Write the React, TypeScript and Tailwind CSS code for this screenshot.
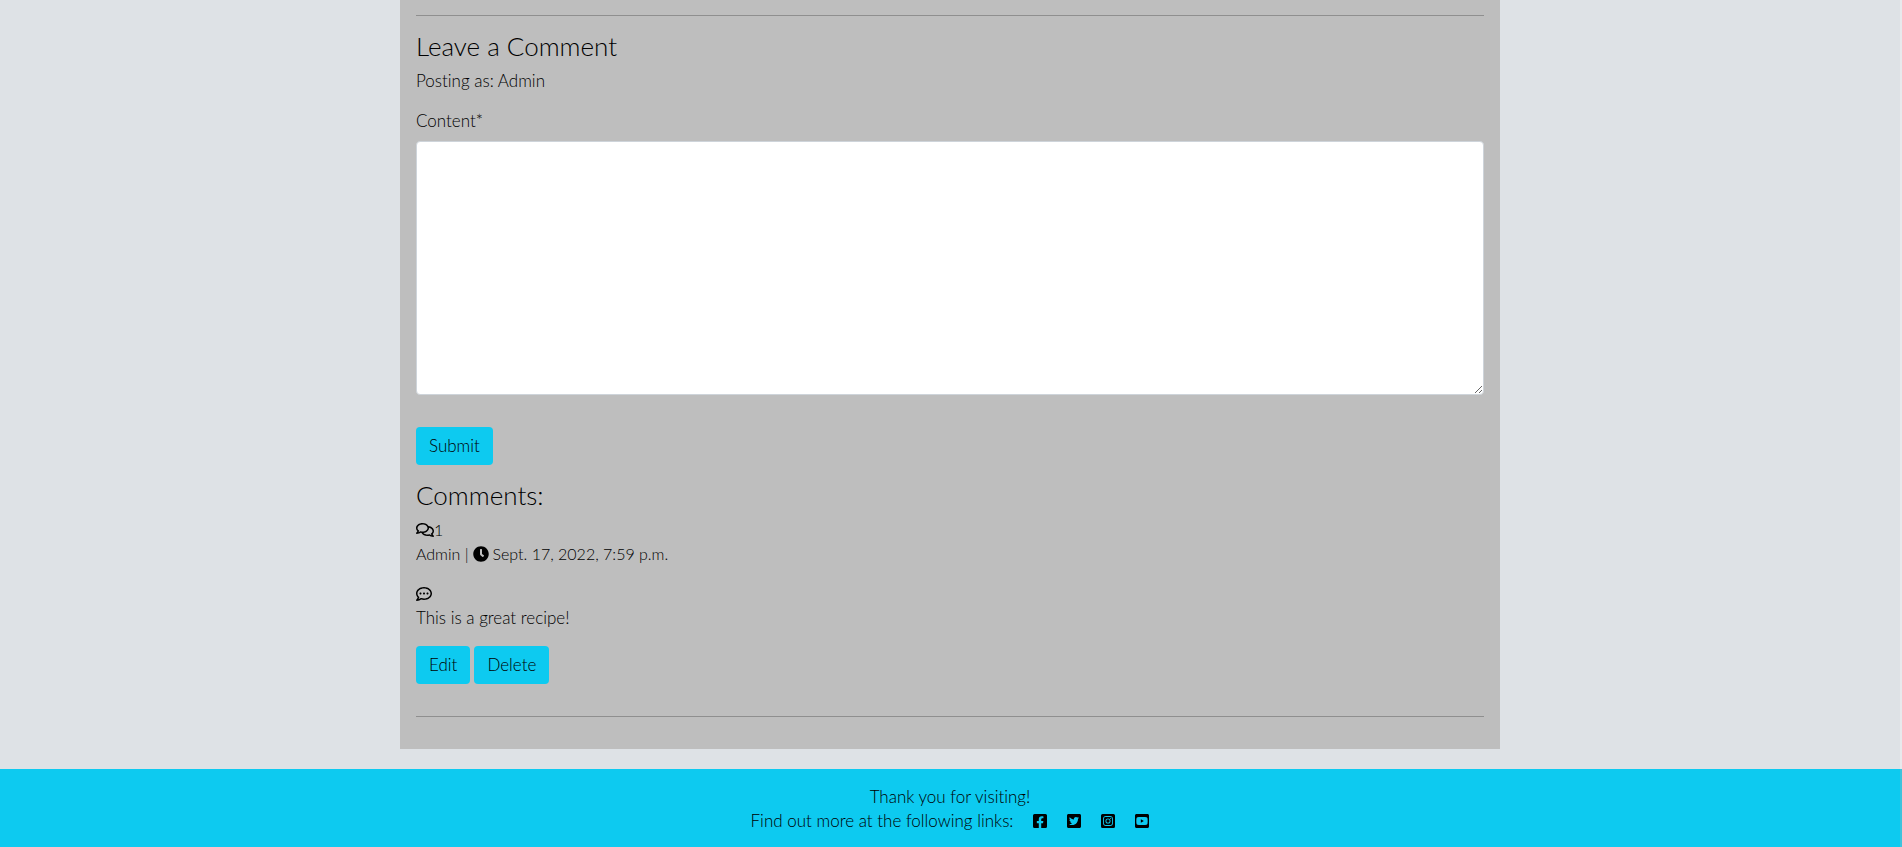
import {
  FaClock,
  FaFacebookSquare,
  FaInstagramSquare,
  FaRegCommentDots,
  FaRegComments,
  FaTwitterSquare,
  FaYoutubeSquare,
} from "react-icons/fa";

const buttonClass =
  "h-[38px] rounded bg-[#0dcaf0] px-[13px] text-[17px] leading-6 text-black";

const links = [
  { name: "Facebook", href: "#facebook", Icon: FaFacebookSquare },
  { name: "Twitter", href: "#twitter", Icon: FaTwitterSquare },
  { name: "Instagram", href: "#instagram", Icon: FaInstagramSquare },
  { name: "YouTube", href: "#youtube", Icon: FaYoutubeSquare },
];

function CommentForm() {
  return (
    <form onSubmit={(e) => e.preventDefault()}>
      <h3 className="mb-2 text-[26px] leading-[29px]">Leave a Comment</h3>
      <p className="mb-4">Posting as: Admin</p>
      <label htmlFor="content" className="mb-2 block">
        Content*
      </label>
      <textarea
        id="content"
        rows={10}
        className="mb-8 block w-full resize-y rounded border border-[#ced4da] bg-white px-3 py-1.5"
      />
      <button type="submit" className={buttonClass}>
        Submit
      </button>
    </form>
  );
}

function Comments() {
  return (
    <section className="mt-4">
      <h3 className="mb-2 text-[26px] leading-[29px]">Comments:</h3>
      <div className="flex items-center text-base leading-6">
        <FaRegComments className="h-4 w-[18px] text-black" />1
      </div>
      <p className="mb-4 flex items-center gap-1 text-base leading-6">
        <span>Admin |</span>
        <FaClock className="size-4 text-black" />
        <span>Sept. 17, 2022, 7:59 p.m.</span>
      </p>
      <div className="flex h-6 items-center">
        <FaRegCommentDots className="size-4 text-black" />
      </div>
      <p className="mb-4">This is a great recipe!</p>
      <div className="flex gap-1">
        <button type="button" className={buttonClass}>
          Edit
        </button>
        <button type="button" className={buttonClass}>
          Delete
        </button>
      </div>
    </section>
  );
}

export default function App() {
  return (
    <div className="min-h-screen bg-[#dee2e6] font-['Lato','Open_Sans',sans-serif] text-[17px] leading-6 font-light text-black [font-variant-ligatures:none]">
      <div className="border-r-2 border-[#e8e9ec] pb-5">
        <main className="mx-auto max-w-[1100px] bg-[#bebebe] px-4 pt-[15px] pb-8">
          <hr className="mb-4 border-[#8f8f8f]" />
          <CommentForm />
          <Comments />
          <hr className="mt-8 border-[#8f8f8f]" />
        </main>
      </div>
      <footer className="border-r-2 border-[#3dc3dc] bg-[#0dcaf0] px-4 pt-4 pb-[14px] text-center">
        <p>Thank you for visiting!</p>
        <div className="flex flex-wrap items-center justify-center gap-5">
          <span>Find out more at the following links:</span>
          {links.map(({ name, href, Icon }) => (
            <a key={name} href={href} aria-label={name} className="text-black">
              <Icon className="h-4 w-[14px]" />
            </a>
          ))}
        </div>
      </footer>
    </div>
  );
}
